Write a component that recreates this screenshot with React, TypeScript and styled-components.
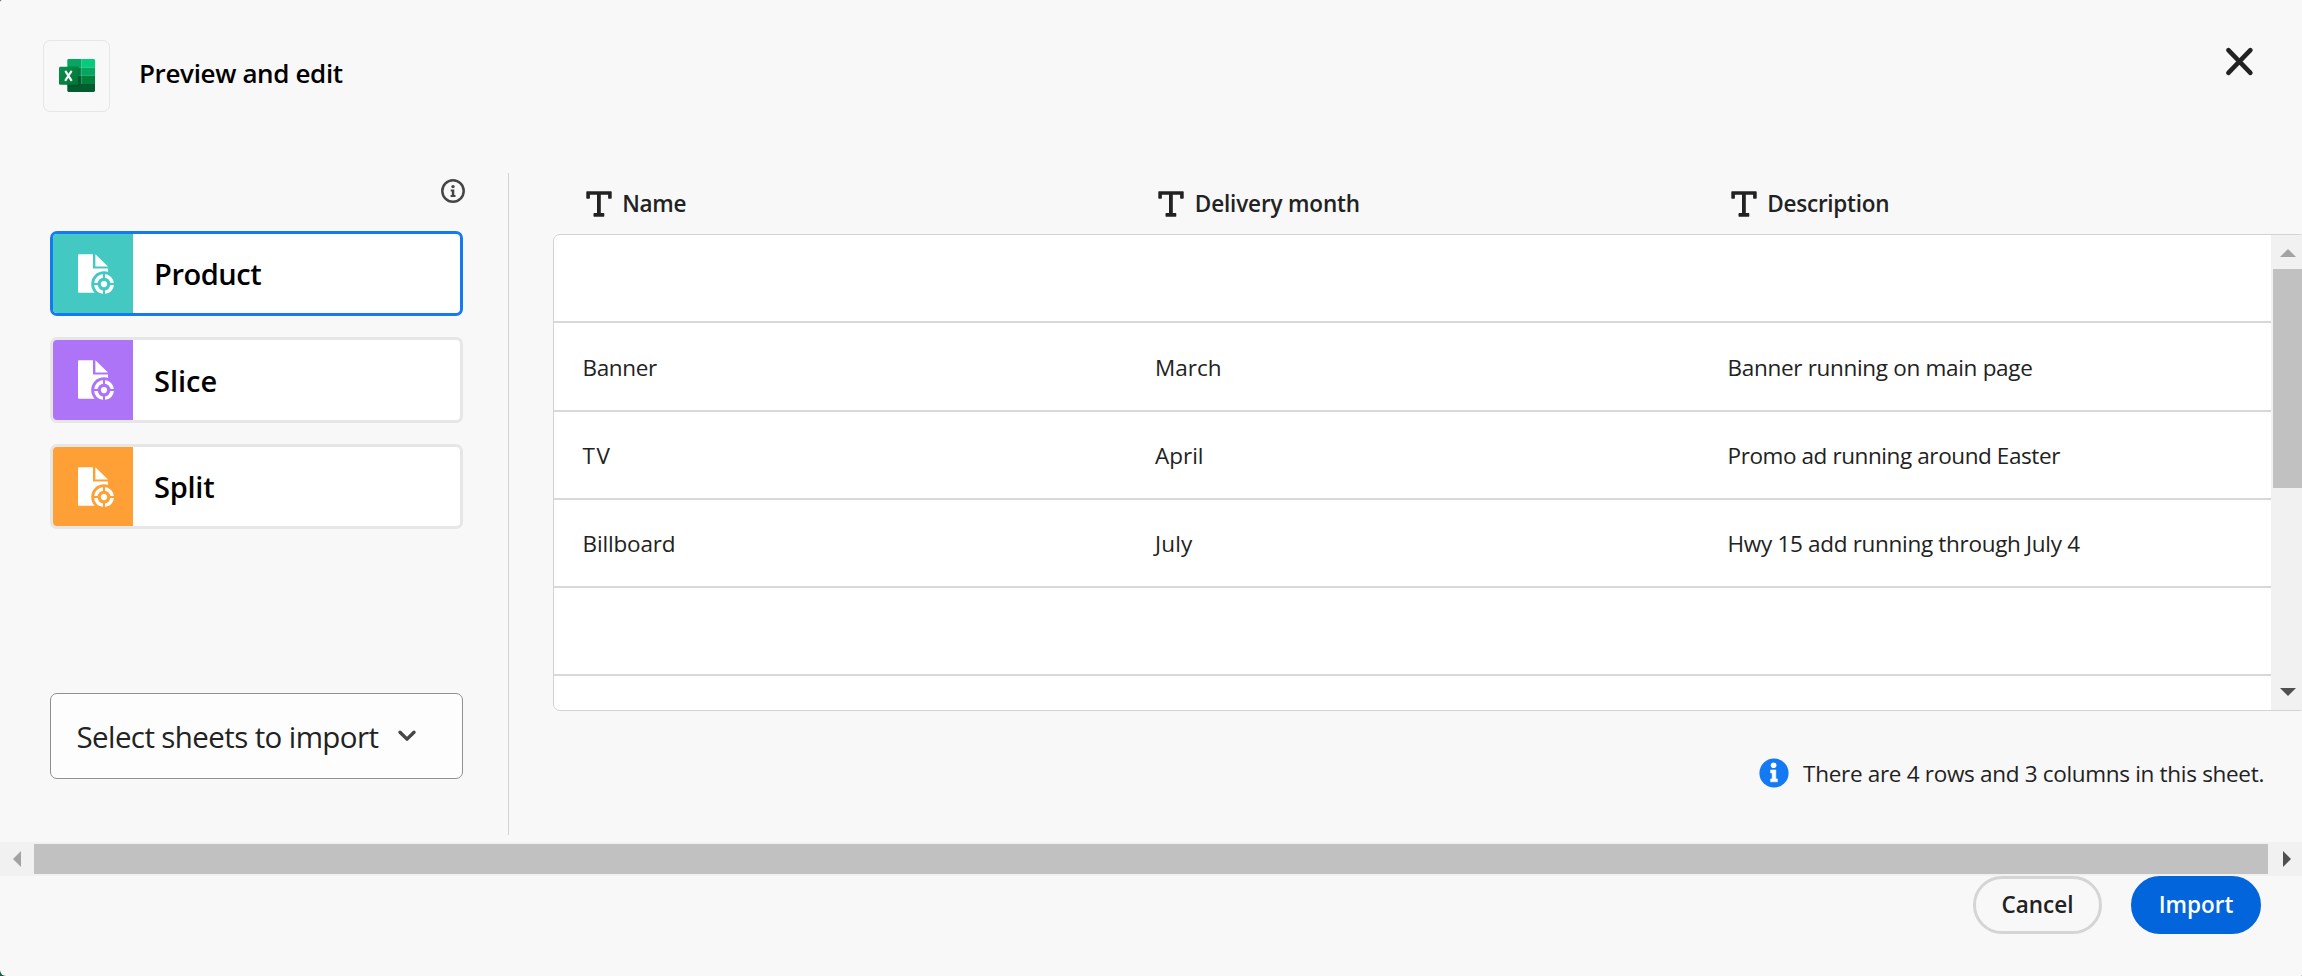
import React from 'react';
import styled, { createGlobalStyle } from 'styled-components';

const GlobalStyle = createGlobalStyle`
  * { box-sizing: border-box; }
  html, body { margin: 0; padding: 0; }
  body {
    background: #1c5c46;
    color: #222;
    font-family: 'Open Sans', 'Noto Sans', sans-serif;
    overflow: hidden;
  }
  svg { display: block; flex: none; }
  button { font: inherit; color: inherit; margin: 0; cursor: pointer; }
`;

const Dialog = styled.div`
  width: 2302px;
  height: 976px;
  display: flex;
  flex-direction: column;
  overflow: hidden;
  background: #f8f8f8;
  border-radius: 2px 0 1px 6px;
`;

const Header = styled.header`
  height: 173px;
  flex: none;
  display: flex;
  align-items: flex-start;
  padding: 40px 47px 0 43px;
`;

const LogoTile = styled.div`
  width: 67px;
  height: 72px;
  padding-left: 15px;
  display: flex;
  align-items: center;
  border: 1px solid #e6e6e6;
  border-radius: 7px;
`;

const Title = styled.h1`
  margin: 0 auto 0 29px;
  font-size: 26px;
  font-weight: 600;
  line-height: 67px;
  letter-spacing: -0.36px;
  color: #000;
`;

const CloseButton = styled.button`
  display: flex;
  padding: 5px 0 0;
  border: 0;
  background: none;
`;

const Body = styled.div`
  height: 662px;
  flex: none;
  display: flex;
`;

const Sidebar = styled.aside`
  width: 509px;
  flex: none;
  display: flex;
  flex-direction: column;
  padding: 0 45px 56px 50px;
  border-right: 1px solid #d3d3d3;
`;

const SidebarInfo = styled.div`
  height: 58px;
  display: flex;
  justify-content: flex-end;
  margin-right: -2px;
  padding-top: 6px;
`;

const SheetList = styled.div`
  display: flex;
  flex-direction: column;
  gap: 21.2px;
`;

const SheetCard = styled.button<{ $active?: boolean }>`
  width: 413px;
  height: 85.3px;
  display: flex;
  align-items: stretch;
  padding: 0;
  overflow: hidden;
  text-align: left;
  background: #fff;
  border: 3px solid ${(p) => (p.$active ? '#147af3' : '#e6e6e6')};
  border-radius: 7px;
`;

const SheetBadge = styled.span<{ $color: string }>`
  width: 80px;
  flex: none;
  padding: 20px 0 0 25px;
  background: ${(p) => p.$color};
`;

const SheetName = styled.span<{ $tracking: number }>`
  align-self: center;
  padding-left: 21px;
  font-size: 29px;
  font-weight: 600;
  color: #000;
  letter-spacing: ${(p) => p.$tracking}px;
`;

const SheetPicker = styled.button`
  width: 413px;
  height: 86px;
  margin-top: auto;
  display: flex;
  align-items: center;
  padding: 0 0 0 25.5px;
  gap: 19px;
  font-size: 29.5px;
  letter-spacing: -0.6px;
  background: #fdfdfd;
  border: 1px solid #909090;
  border-radius: 7px;
`;

const Main = styled.main`
  width: 1753px;
  flex: none;
  margin-left: 44px;
`;

const ColumnHeads = styled.div`
  height: 61px;
  display: grid;
  grid-template-columns: repeat(3, 572.5px);
  padding-left: 1px;
`;

const ColumnHead = styled.div<{ $tracking: number }>`
  display: flex;
  align-items: center;
  gap: 10.5px;
  padding-left: 31.8px;
  font-size: 22.5px;
  font-weight: 600;
  letter-spacing: ${(p) => p.$tracking}px;
`;

const TableFrame = styled.div`
  height: 477px;
  display: flex;
  overflow: hidden;
  background: #fff;
  border: 1px solid #d3d3d3;
  border-radius: 7px;
`;

const Rows = styled.div`
  width: 1717px;
  flex: none;
`;

const Row = styled.div`
  height: 88.25px;
  display: grid;
  grid-template-columns: repeat(3, 572.5px);
  align-items: center;
  padding-top: 2px;
  border-bottom: 2px solid #d8d8d8;
`;

const Cell = styled.div<{ $tracking: number }>`
  padding-left: 28.5px;
  font-size: 22.5px;
  white-space: nowrap;
  letter-spacing: ${(p) => p.$tracking}px;
`;

const VerticalBar = styled.div`
  width: 34px;
  display: flex;
  flex-direction: column;
  align-items: center;
  justify-content: space-between;
  padding: 14px 0;
  background: #f1f1f1;
`;

const VerticalThumb = styled.div`
  width: 30px;
  height: 219px;
  margin: 12px 0 auto;
  background: #c1c1c1;
`;

const Summary = styled.div`
  display: flex;
  align-items: center;
  justify-content: flex-end;
  gap: 14px;
  height: 30px;
  margin: 47px 42px 0 0;
  font-size: 22.5px;
  letter-spacing: -0.31px;
`;

const HorizontalBar = styled.div`
  height: 34px;
  flex: none;
  margin-top: 7px;
  display: flex;
  align-items: center;
  padding: 0 11px 0 13px;
  background: #f1f1f1;
`;

const HorizontalThumb = styled.div`
  flex: 1;
  height: 30px;
  margin: 0 15px 0 13px;
  background: #c1c1c1;
`;

const Footer = styled.footer`
  display: flex;
  justify-content: flex-end;
  gap: 29px;
  padding-right: 41px;
`;

const ActionButton = styled.button<{ $primary?: boolean }>`
  width: ${(p) => (p.$primary ? 130 : 129)}px;
  height: 58px;
  padding: 0 0 1px;
  border: 3px solid ${(p) => (p.$primary ? '#0265dc' : '#d5d5d5')};
  border-radius: 29px;
  background: ${(p) => (p.$primary ? '#0265dc' : 'transparent')};
  color: ${(p) => (p.$primary ? '#fff' : '#222')};
  font-size: 22.5px;
  font-weight: 600;
`;

const ExcelLogo = () => (
  <svg width="36" height="34" viewBox="0 0 36 34">
    <defs>
      <linearGradient id="xl" x1="0" y1="0" x2="1" y2="1">
        <stop offset="0" stopColor="#09914a" />
        <stop offset="1" stopColor="#047338" />
      </linearGradient>
      <clipPath id="sheet"><rect x="8.3" y="0" width="27.7" height="33" rx="1.4" /></clipPath>
    </defs>
    <g clipPath="url(#sheet)">
      <rect x="8" width="14.3" height="8.4" fill="#05a662" />
      <rect x="22.3" width="14" height="8.4" fill="#04cc7c" />
      <rect x="8" y="8.4" width="14.3" height="8.4" fill="#03894a" />
      <rect x="22.3" y="8.4" width="14" height="8.4" fill="#05a662" />
      <rect x="8" y="16.8" width="14.3" height="8.2" fill="#025c30" />
      <rect x="22.3" y="16.8" width="14" height="8.2" fill="#027f3b" />
      <rect x="8" y="25" width="28.3" height="8.2" fill="#025c30" />
      <rect x="8" y="7.4" width="12.6" height="20" rx="1.5" fill="#003d1c" opacity="0.28" />
    </g>
    <rect x="0" y="7.8" width="19.3" height="18" rx="1.4" fill="url(#xl)" />
    <path d="M6.3 11.9 12.7 21.9M12.6 11.9 6.1 21.9" stroke="#fff" strokeWidth="2.1" />
  </svg>
);

const CloseIcon = () => (
  <svg width="32" height="32" viewBox="0 0 32 32">
    <path d="M5.4 5.2 27.4 27.8M27.4 5.2 5.4 27.8" stroke="#222" strokeWidth="4.6" strokeLinecap="round" />
  </svg>
);

const InfoOutline = () => (
  <svg width="24" height="24" viewBox="0 0 24 24">
    <circle cx="12" cy="12" r="10.7" fill="none" stroke="#464646" strokeWidth="2.5" />
    <circle cx="12" cy="7.6" r="1.7" fill="#464646" />
    <path d="M9.7 10.5h3.6v5.6h1.2v1.9H9.6v-1.9h1.2v-3.7H9.7z" fill="#464646" />
  </svg>
);

const InfoFilled = () => (
  <svg width="30" height="30" viewBox="0 0 30 30">
    <circle cx="15" cy="15" r="14.6" fill="#147af3" />
    <circle cx="14.6" cy="7.3" r="2.8" fill="#fff" />
    <path d="M11.6 12h5.2v8.9h1.6v2.9h-6.8v-2.9h1.6v-6h-1.6z" fill="#fff" stroke="#fff" strokeWidth="0.6" strokeLinejoin="round" />
  </svg>
);

const SheetIcon = ({ color }: { color: string }) => (
  <svg width="38" height="42" viewBox="0 0 38 42">
    <path d="M1 .3H15V14.4H30V38.7H1a1 1 0 0 1-1-1V1.3a1 1 0 0 1 1-1z" fill="#fff" />
    <path d="M17.4.3 30 12.6H17.4z" fill="#fff" />
    <circle cx="26" cy="30.1" r="12.8" fill={color} />
    <circle cx="26" cy="30.1" r="8.2" fill="none" stroke="#fff" strokeWidth="3.6" />
    <path d="M26 19v22M15 30.1h22" stroke={color} strokeWidth="2" />
    <circle cx="26" cy="30.1" r="6.2" fill={color} />
    <circle cx="26" cy="30.1" r="3.1" fill="#fff" />
  </svg>
);

const TextTypeIcon = () => (
  <svg width="26" height="26" viewBox="0 0 26 26">
    <path
      d="M1 .3H25a.7.7 0 0 1 .7.7V7a.7.7 0 0 1-.7.7h-2.2a.7.7 0 0 1-.7-.7V3.8H14.8V22.1H17.6a.7.7 0 0 1 .7.7V25a.7.7 0 0 1-.7.7H8.2a.7.7 0 0 1-.7-.7V22.8a.7.7 0 0 1 .7-.7H11V3.8H3.9V7a.7.7 0 0 1-.7.7H1A.7.7 0 0 1 .3 7V1A.7.7 0 0 1 1 .3z"
      fill="#222"
    />
  </svg>
);

const ChevronDown = () => (
  <svg width="20" height="14" viewBox="0 0 20 14">
    <path d="M3 3.2 10 10.1 17 3.2" fill="none" stroke="#464646" strokeWidth="3.4" strokeLinecap="round" strokeLinejoin="round" />
  </svg>
);

const arrows = {
  up: { w: 16, h: 8, d: 'M0 8 8 0 16 8z', fill: '#a3a3a3' },
  down: { w: 16, h: 8, d: 'M0 0H16L8 8z', fill: '#505050' },
  left: { w: 8, h: 16, d: 'M8 0V16L0 8z', fill: '#a3a3a3' },
  right: { w: 8, h: 16, d: 'M0 0 8 8 0 16z', fill: '#505050' },
};

const Arrow = ({ to }: { to: keyof typeof arrows }) => {
  const a = arrows[to];
  return (
    <svg width={a.w} height={a.h} viewBox={`0 0 ${a.w} ${a.h}`}>
      <path d={a.d} fill={a.fill} />
    </svg>
  );
};

type Label = { text: string; tracking: number };

const sheets = [
  { text: 'Product', tracking: -0.45, color: '#44c9c2' },
  { text: 'Slice', tracking: 0, color: '#ad74f8' },
  { text: 'Split', tracking: -0.25, color: '#ffa037' },
];

const columns: Label[] = [
  { text: 'Name', tracking: -0.35 },
  { text: 'Delivery month', tracking: -0.15 },
  { text: 'Description', tracking: -0.25 },
];

const blank: Label[] = [];

const rows: Label[][] = [
  blank,
  [
    { text: 'Banner', tracking: -0.35 },
    { text: 'March', tracking: 0 },
    { text: 'Banner running on main page', tracking: -0.31 },
  ],
  [
    { text: 'TV', tracking: 1.6 },
    { text: 'April', tracking: 0 },
    { text: 'Promo ad running around Easter', tracking: -0.41 },
  ],
  [
    { text: 'Billboard', tracking: -0.15 },
    { text: 'July', tracking: 0.2 },
    { text: 'Hwy 15 add running through July 4', tracking: -0.31 },
  ],
  blank,
  blank,
];

export default function App() {
  return (
    <>
      <GlobalStyle />
      <Dialog>
        <Header>
          <LogoTile><ExcelLogo /></LogoTile>
          <Title>Preview and edit</Title>
          <CloseButton aria-label="Close"><CloseIcon /></CloseButton>
        </Header>
        <Body>
          <Sidebar>
            <SidebarInfo><InfoOutline /></SidebarInfo>
            <SheetList>
              {sheets.map((s, i) => (
                <SheetCard key={s.text} $active={i === 0}>
                  <SheetBadge $color={s.color}><SheetIcon color={s.color} /></SheetBadge>
                  <SheetName $tracking={s.tracking}>{s.text}</SheetName>
                </SheetCard>
              ))}
            </SheetList>
            <SheetPicker>
              Select sheets to import
              <ChevronDown />
            </SheetPicker>
          </Sidebar>
          <Main>
            <ColumnHeads>
              {columns.map((c) => (
                <ColumnHead key={c.text} $tracking={c.tracking}>
                  <TextTypeIcon />
                  {c.text}
                </ColumnHead>
              ))}
            </ColumnHeads>
            <TableFrame>
              <Rows>
                {rows.map((cells, i) => (
                  <Row key={i}>
                    {cells.map((c) => (
                      <Cell key={c.text} $tracking={c.tracking}>{c.text}</Cell>
                    ))}
                  </Row>
                ))}
              </Rows>
              <VerticalBar>
                <Arrow to="up" />
                <VerticalThumb />
                <Arrow to="down" />
              </VerticalBar>
            </TableFrame>
            <Summary>
              <InfoFilled />
              There are 4 rows and 3 columns in this sheet.
            </Summary>
          </Main>
        </Body>
        <HorizontalBar>
          <Arrow to="left" />
          <HorizontalThumb />
          <Arrow to="right" />
        </HorizontalBar>
        <Footer>
          <ActionButton>Cancel</ActionButton>
          <ActionButton $primary>Import</ActionButton>
        </Footer>
      </Dialog>
    </>
  );
}
